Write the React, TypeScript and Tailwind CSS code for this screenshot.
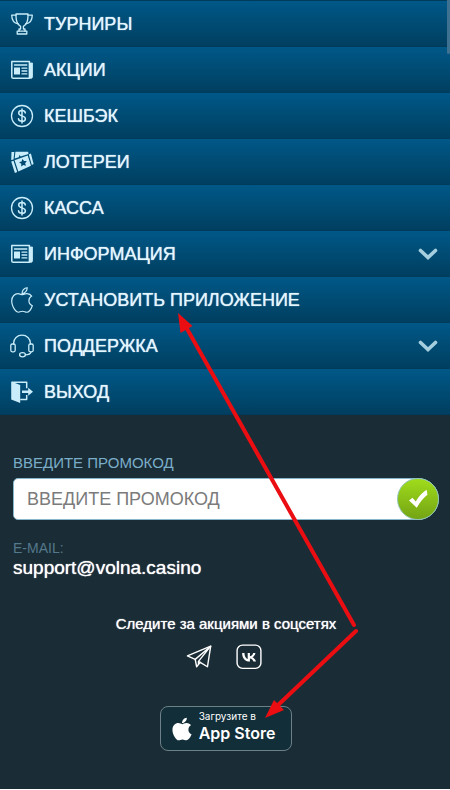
import type { ReactNode } from 'react'
import { FaApple } from 'react-icons/fa'

const iconProps = {
  viewBox: '0 0 24 24',
  fill: 'none',
  stroke: 'currentColor',
  strokeWidth: 1.3,
  strokeLinecap: 'round' as const,
  strokeLinejoin: 'round' as const,
  className: 'size-6',
  'aria-hidden': true,
}

function TrophyIcon() {
  return (
    <svg {...iconProps}>
      <path d="M6 2h12v2c0 5-2 9-4.600 10.400V17h1.600v2.200H9V17h1.600v-2.600C8 13 6 9 6 4z" />
      <path d="M6 3.200H1.700c.1 4.200 1.500 8 6.600 8.600M18 3.200h4.300c-.1 4.200-1.500 8-6.600 8.600" />
      <path d="M9 19.200H7.200V22h9.600v-2.800H15" />
    </svg>
  )
}

function NewsIcon() {
  return (
    <svg {...iconProps}>
      <path d="M1.800 3.500h17.600v16.800H3.200a1.400 1.400 0 0 1-1.400-1.400z" strokeWidth="1.500" />
      <path d="M20 5h2.500v13.800c0 .9-.6 1.500-1.300 1.500H20z" fill="currentColor" strokeWidth=".8" />
      <path d="M4 9.500h6v7H4z" fill="currentColor" stroke="none" />
      <path d="M4.500 7h12.300M12 10.200h4.800M12 13h4.800M12 15.900h4.800" />
    </svg>
  )
}

function DollarIcon() {
  return (
    <svg {...iconProps}>
      <circle cx="12" cy="12" r="10.500" />
      <path d="M15.300 8.900c-.2-1.500-1.500-2.300-3.300-2.300s-3.300.9-3.300 2.500c0 3.700 6.700 1.900 6.700 5.600 0 1.700-1.500 2.600-3.400 2.600s-3.400-.9-3.500-2.500M12 4.900v14.200" strokeWidth="1.500" />
    </svg>
  )
}

function TicketsIcon() {
  return (
    <svg {...iconProps} stroke="none" fill="currentColor">
      <path d="M1.500 2h2.800l-.8 7.500-2.300.6z" />
      <path d="M5.400 1.700h12.800l.3 2.400-8 2.400-.8-1.700-1 2.400-4 1.300z" />
      <path fillRule="evenodd" d="m4.600 10.300 13.100-4.800 3.300 10.200-12.700 5.900zM12.300 9l-.7 2.500-2.600.8 2.300 1.500-.1 2.600 2.200-1.500 2.600.8-.9-2.500 1.700-2.100-2.700-.1z" />
      <path d="m1.200 11.600 2.300-.9 3.700 11.400-2.300.8zM18.800 4.400l2.100-.8 2.700 10.400-1.800.9z" />
    </svg>
  )
}

function HeadsetIcon() {
  return (
    <svg {...iconProps}>
      <path d="M3.600 10v-.8C3.600 4.700 7.300 1.200 12 1.200s8.400 3.500 8.400 8v.8" />
      <rect x=".8" y="10" width="4.400" height="7.800" rx="1.500" />
      <rect x="18.800" y="10" width="4.400" height="7.800" rx="1.500" />
      <path d="M21 17.800c-.5 2.200-2.600 3-5.600 3" />
      <ellipse cx="12.500" cy="20.800" rx="2.900" ry="2.100" />
    </svg>
  )
}

function ExitIcon() {
  return (
    <svg {...iconProps} strokeLinecap="butt">
      <path d="M1.200 1.500 10.200 5v18l-9-3.500z" fill="currentColor" stroke="none" />
      <path d="M2 2.300h14.700v6M16.700 15v4.500h-6.500" strokeWidth="1.500" />
      <path d="M12 10.500h6.200V7.800l4.800 4-4.800 4v-2.700H12z" fill="currentColor" stroke="none" />
    </svg>
  )
}

function Chevron() {
  return (
    <svg viewBox="0 0 20 12" className="h-3 w-5 text-[#a5cfdf]" aria-hidden="true">
      <path d="m2.500 2.500 7.500 7 7.500-7" fill="none" stroke="currentColor" strokeWidth="3.600" strokeLinecap="round" />
    </svg>
  )
}

type Item = { label: string; icon: ReactNode; expandable?: boolean }

const items: Item[] = [
  { label: 'ТУРНИРЫ', icon: <TrophyIcon /> },
  { label: 'АКЦИИ', icon: <NewsIcon /> },
  { label: 'КЕШБЭК', icon: <DollarIcon /> },
  { label: 'ЛОТЕРЕИ', icon: <TicketsIcon /> },
  { label: 'КАССА', icon: <DollarIcon /> },
  { label: 'ИНФОРМАЦИЯ', icon: <NewsIcon />, expandable: true },
  {
    label: 'УСТАНОВИТЬ ПРИЛОЖЕНИЕ',
    icon: <FaApple className="size-7 fill-none overflow-visible [stroke-width:22px]" />,
  },
  { label: 'ПОДДЕРЖКА', icon: <HeadsetIcon />, expandable: true },
  { label: 'ВЫХОД', icon: <ExitIcon /> },
]

const rowClass =
  'flex h-[46px] w-full items-center border-b border-[#003b5b] bg-linear-to-b from-[#005888] to-[#003f60] pl-2 pr-3 text-left text-lg text-[#e4f6ff]'

function MenuRow({ label, icon, expandable }: Item) {
  const content = (
    <>
      <span className="mr-2 flex w-7 shrink-0 justify-center text-[#c9edfa]">{icon}</span>
      <span className="grow [text-shadow:0_0_1px_#e4f6ff]">{label}</span>
      {expandable && <Chevron />}
    </>
  )

  if (expandable) {
    return (
      <button type="button" aria-expanded="false" className={rowClass}>
        {content}
      </button>
    )
  }

  return (
    <a href="#" className={rowClass}>
      {content}
    </a>
  )
}

function Arrows() {
  return (
    <svg
      viewBox="0 0 450 790"
      className="pointer-events-none absolute left-0 top-0 w-full"
      fill="#ea0e12"
      stroke="#ea0e12"
      aria-hidden="true"
    >
      <path d="M354 625 186 327M356 631l-80 76" strokeWidth="4" strokeLinecap="round" />
      <path d="m178 313 2.500 20 12-7zM265 718l9-18 10 10z" stroke="none" />
    </svg>
  )
}

export default function App() {
  return (
    <div className="relative min-h-[calc(100vh-1px)] overflow-hidden bg-[#1a2c35] font-['Liberation_Sans',Arial,sans-serif] text-white">
      <nav className="border-t border-[#003b5b]">
        {items.map((item) => (
          <MenuRow key={item.label} {...item} />
        ))}
      </nav>
      <div className="absolute right-0 top-0 h-[54px] w-[3px] rounded-b bg-[#3f7190]" />

      <div className="pl-[13px] pr-[11px] pt-[38px]">
        <form>
          <label htmlFor="promo" className="block text-[15px] leading-5 text-[#7aaec9]">
            ВВЕДИТЕ ПРОМОКОД
          </label>
          <div className="mt-[5px] flex h-[42px] rounded-l-[5px] rounded-r-[21px] border border-[#86b7cb] bg-white">
            <input
              id="promo"
              type="text"
              placeholder="ВВЕДИТЕ ПРОМОКОД"
              className="min-w-0 grow pl-[13px] text-lg text-gray-800 outline-none placeholder:text-[#7b7b7b]"
            />
            <button
              type="submit"
              aria-label="OK"
              className="-my-px -mr-px flex size-[42px] shrink-0 items-center justify-center rounded-full border border-[#8fc4b0] bg-linear-to-b from-[#a0dc1c] to-[#74a414]"
            >
              <svg viewBox="0 0 20 20" className="size-5" fill="#fff" aria-hidden="true">
                <path d="M1 11.500 4.500 8.800l3.300 3.700C10.500 7.500 14.500 3 18.800 1l.6 4.700C15.500 8.500 12 13 8.800 18.800z" />
              </svg>
            </button>
          </div>
        </form>

        <div className="mt-5">
          <p className="text-sm leading-4 text-[#54788c]">E-MAIL:</p>
          <a href="mailto:support@volna.casino" className="block text-[19px] leading-6 [text-shadow:0_0_1px_#fff]">
            support@volna.casino
          </a>
        </div>

        <p className="mt-8 text-center text-[15px] leading-6 [text-shadow:0_0_1px_#fff]">Следите за акциями в соцсетях</p>
        <div className="mt-2 flex justify-center gap-6 pr-1">
          <a href="#" aria-label="Telegram">
            <svg {...iconProps} className="size-[26px]">
              <path d="M1.300 11 22.800 2l-3 19-6.700-4-3.300 4-1.300-6.800z" />
              <path d="M22.800 2 8.500 14.200M22.800 2 11.500 16v2.800M11.500 16l1.600 1" />
            </svg>
          </a>
          <a href="#" aria-label="VK">
            <svg {...iconProps} className="size-[26px]">
              <rect x="1" y="1" width="22" height="21.500" rx="5" />
              <path
                d="M6.790 7.300H4.050c.13 6.240 3.250 9.990 8.720 9.990h.31v-3.570c2.010.2 3.530 1.670 4.140 3.570h2.840c-.78-2.840-2.830-4.410-4.110-5.010 1.280-.74 3.080-2.540 3.510-4.980h-2.580c-.56 1.980-2.220 3.780-3.800 3.950V7.300H10.500v6.920c-1.600-.4-3.620-2.340-3.710-6.920Z"
                transform="translate(2.400 2.400) scale(.8)"
                fill="currentColor"
                stroke="none"
              />
            </svg>
          </a>
        </div>

        <div className="mt-9 flex justify-center pb-8">
          <a
            href="#"
            className="flex h-[45px] items-center gap-1 rounded-lg border border-[#6d8087] bg-[#112e39] pl-2 pr-4 font-['Inter',sans-serif]"
          >
            <FaApple className="size-[26px]" />
            <span className="pb-1">
              <span className="block text-[10px] leading-[13px]">Загрузите в</span>
              <span className="block text-base font-semibold leading-5">App Store</span>
            </span>
          </a>
        </div>
      </div>

      <Arrows />
    </div>
  )
}
